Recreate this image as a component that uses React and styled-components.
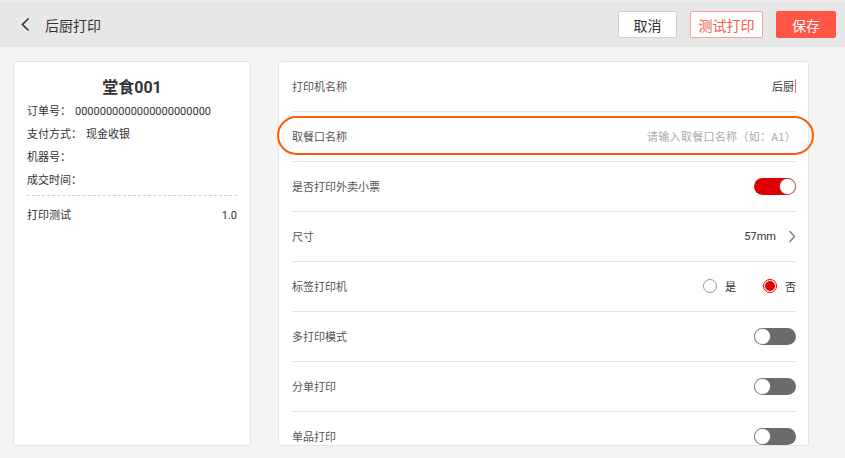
import React from "react";
import styled, { createGlobalStyle } from "styled-components";

const Global = createGlobalStyle`
  html, body { margin: 0; padding: 0; background: #f4f4f4; }
  body { font-family: Roboto, "Noto Sans CJK SC", "Noto Sans", sans-serif; color: #333; text-spacing-trim: space-all; }
  * { box-sizing: border-box; }
`;

const Page = styled.div`
  width: 845px;
  height: 458px;
  display: flex;
  flex-direction: column;
  background: #f4f4f4;
  overflow: hidden;
`;

const Header = styled.header`
  height: 47px;
  flex: none;
  display: flex;
  align-items: center;
  background: #e7e7e7;
  border-top: 2px solid #efefef;
  padding: 0 9px 0 20px;
`;

const Back = styled.div`
  display: flex;
  align-items: center;
  width: 25px;
`;

const Title = styled.div`
  font-size: 14px;
  color: #333;
  flex: 1;
`;

const Btn = styled.button`
  font-family: inherit;
  font-size: 14px;
  height: 27px;
  padding: 0;
  width: ${(p) => p.$w}px;
  margin-left: 13px;
  border-radius: 2px;
  cursor: pointer;
  border: 1px solid ${(p) => (p.$variant === "primary" ? "#ff5545" : p.$variant === "outline" ? "#f5a29c" : "#d0d0d0")};
  background: ${(p) => (p.$variant === "primary" ? "#ff5545" : "#fff")};
  color: ${(p) => (p.$variant === "primary" ? "#fff" : p.$variant === "outline" ? "#ee5a50" : "#333")};
`;

const Main = styled.main`
  flex: 1;
  display: flex;
  gap: 27px;
  padding: 14px 36px 12px 13px;
  min-height: 0;
`;

const Receipt = styled.section`
  width: 238px;
  flex: none;
  background: #fff;
  border: 1px solid #e4e4e4;
  border-radius: 3px;
  padding: 16px 13px 0 13px;
`;

const ReceiptTitle = styled.div`
  text-align: center;
  font-size: 16px;
  font-weight: 700;
  color: #333;
  line-height: 20px;
  margin-bottom: 2px;
`;

const InfoRow = styled.div`
  display: flex;
  font-size: 11px;
  line-height: 23px;
  color: #333;
  gap: 4px;
`;

const Dashed = styled.div`
  border-top: 1px dashed #cfcfcf;
  margin: 3px 0 9px;
`;

const ItemRow = styled.div`
  display: flex;
  justify-content: space-between;
  font-size: 11px;
  line-height: 22px;
  color: #333;
`;

const CardWrap = styled.div`
  position: relative;
  flex: 1;
  display: flex;
`;

const Card = styled.section`
  flex: 1;
  background: #fff;
  border: 1px solid #e4e4e4;
  border-radius: 3px;
  overflow: hidden;
  padding: 0 12px 0 13px;
`;

const Row = styled.div`
  height: 50px;
  display: flex;
  align-items: center;
  border-bottom: 1px solid #e2e2e2;
  padding-bottom: 1px;
`;

const Label = styled.div`
  flex: 1;
  font-size: 11px;
  color: #555;
`;

const Value = styled.div`
  font-size: 11px;
  color: ${(p) => (p.$muted ? "#aaa" : "#333")};
  letter-spacing: ${(p) => (p.$muted ? "0.3px" : "0")};
  font-family: ${(p) => (p.$muted ? '"Noto Sans CJK SC", sans-serif' : "inherit")};
  font-feature-settings: "halt" 0, "chws" 0, "palt" 0;
  display: flex;
  align-items: center;
`;

const Caret = styled.span`
  display: inline-block;
  width: 1px;
  height: 14px;
  background: #f07070;
  margin-left: 1px;
`;

const Toggle = styled.div`
  position: relative;
  width: 42px;
  height: 17px;
  border-radius: 9px;
  background: ${(p) => (p.$on ? "#e00000" : "#6b6b6b")};
  &::after {
    content: "";
    position: absolute;
    top: 1px;
    ${(p) => (p.$on ? "right: 1px;" : "left: 1px;")}
    width: 15px;
    height: 15px;
    border-radius: 50%;
    background: #fff;
    box-shadow: 0 0 0 0.5px #999;
  }
`;

const RadioGroup = styled.div`
  display: flex;
  align-items: center;
  font-size: 11px;
  color: #333;
`;

const RadioItem = styled.label`
  display: flex;
  align-items: center;
  gap: 8px;
  margin-left: ${(p) => p.$ml || 0}px;
`;

const Radio = styled.span`
  width: 14px;
  height: 14px;
  border-radius: 50%;
  border: 1px solid ${(p) => (p.$checked ? "#e00000" : "#999")};
  display: flex;
  align-items: center;
  justify-content: center;
  &::after {
    content: "";
    width: 10px;
    height: 10px;
    border-radius: 50%;
    background: ${(p) => (p.$checked ? "#e00000" : "transparent")};
  }
`;

const Highlight = styled.div`
  position: absolute;
  left: -1px;
  top: 55px;
  width: 537px;
  height: 39px;
  border: 2px solid #ff5a0a;
  border-radius: 20px;
  pointer-events: none;
`;

const Chevron = () => (
  <svg width="8" height="13" viewBox="0 0 8 13" style={{ marginLeft: 12 }}>
    <path d="M1.5 1 L6.5 6.5 L1.5 12" fill="none" stroke="#777" strokeWidth="1.3" />
  </svg>
);

export default function App() {
  return (
    <Page>
      <Global />
      <Header>
        <Back>
          <svg width="11" height="15" viewBox="0 0 11 15">
            <path d="M8.5 1.5 L2.5 7.5 L8.5 13.5" fill="none" stroke="#333" strokeWidth="1.6" />
          </svg>
        </Back>
        <Title>后厨打印</Title>
        <Btn $w={59}>取消</Btn>
        <Btn $w={73} $variant="outline">测试打印</Btn>
        <Btn $w={60} $variant="primary">保存</Btn>
      </Header>
      <Main>
        <Receipt>
          <ReceiptTitle>堂食001</ReceiptTitle>
          <InfoRow><span>订单号：</span><span>0000000000000000000000</span></InfoRow>
          <InfoRow><span>支付方式：</span><span>现金收银</span></InfoRow>
          <InfoRow><span>机器号：</span></InfoRow>
          <InfoRow><span>成交时间：</span></InfoRow>
          <Dashed />
          <ItemRow><span>打印测试</span><span>1.0</span></ItemRow>
        </Receipt>
        <CardWrap>
          <Card>
            <Row>
              <Label>打印机名称</Label>
              <Value>后厨<Caret /></Value>
            </Row>
            <Row>
              <Label>取餐口名称</Label>
              <Value $muted>请输入取餐口名称（如：A1）</Value>
            </Row>
            <Row>
              <Label>是否打印外卖小票</Label>
              <Toggle $on />
            </Row>
            <Row>
              <Label>尺寸</Label>
              <Value>57mm<Chevron /></Value>
            </Row>
            <Row>
              <Label>标签打印机</Label>
              <RadioGroup>
                <RadioItem><Radio />是</RadioItem>
                <RadioItem $ml={27}><Radio $checked />否</RadioItem>
              </RadioGroup>
            </Row>
            <Row>
              <Label>多打印模式</Label>
              <Toggle />
            </Row>
            <Row>
              <Label>分单打印</Label>
              <Toggle />
            </Row>
            <Row>
              <Label>单品打印</Label>
              <Toggle />
            </Row>
          </Card>
          <Highlight />
        </CardWrap>
      </Main>
    </Page>
  );
}
